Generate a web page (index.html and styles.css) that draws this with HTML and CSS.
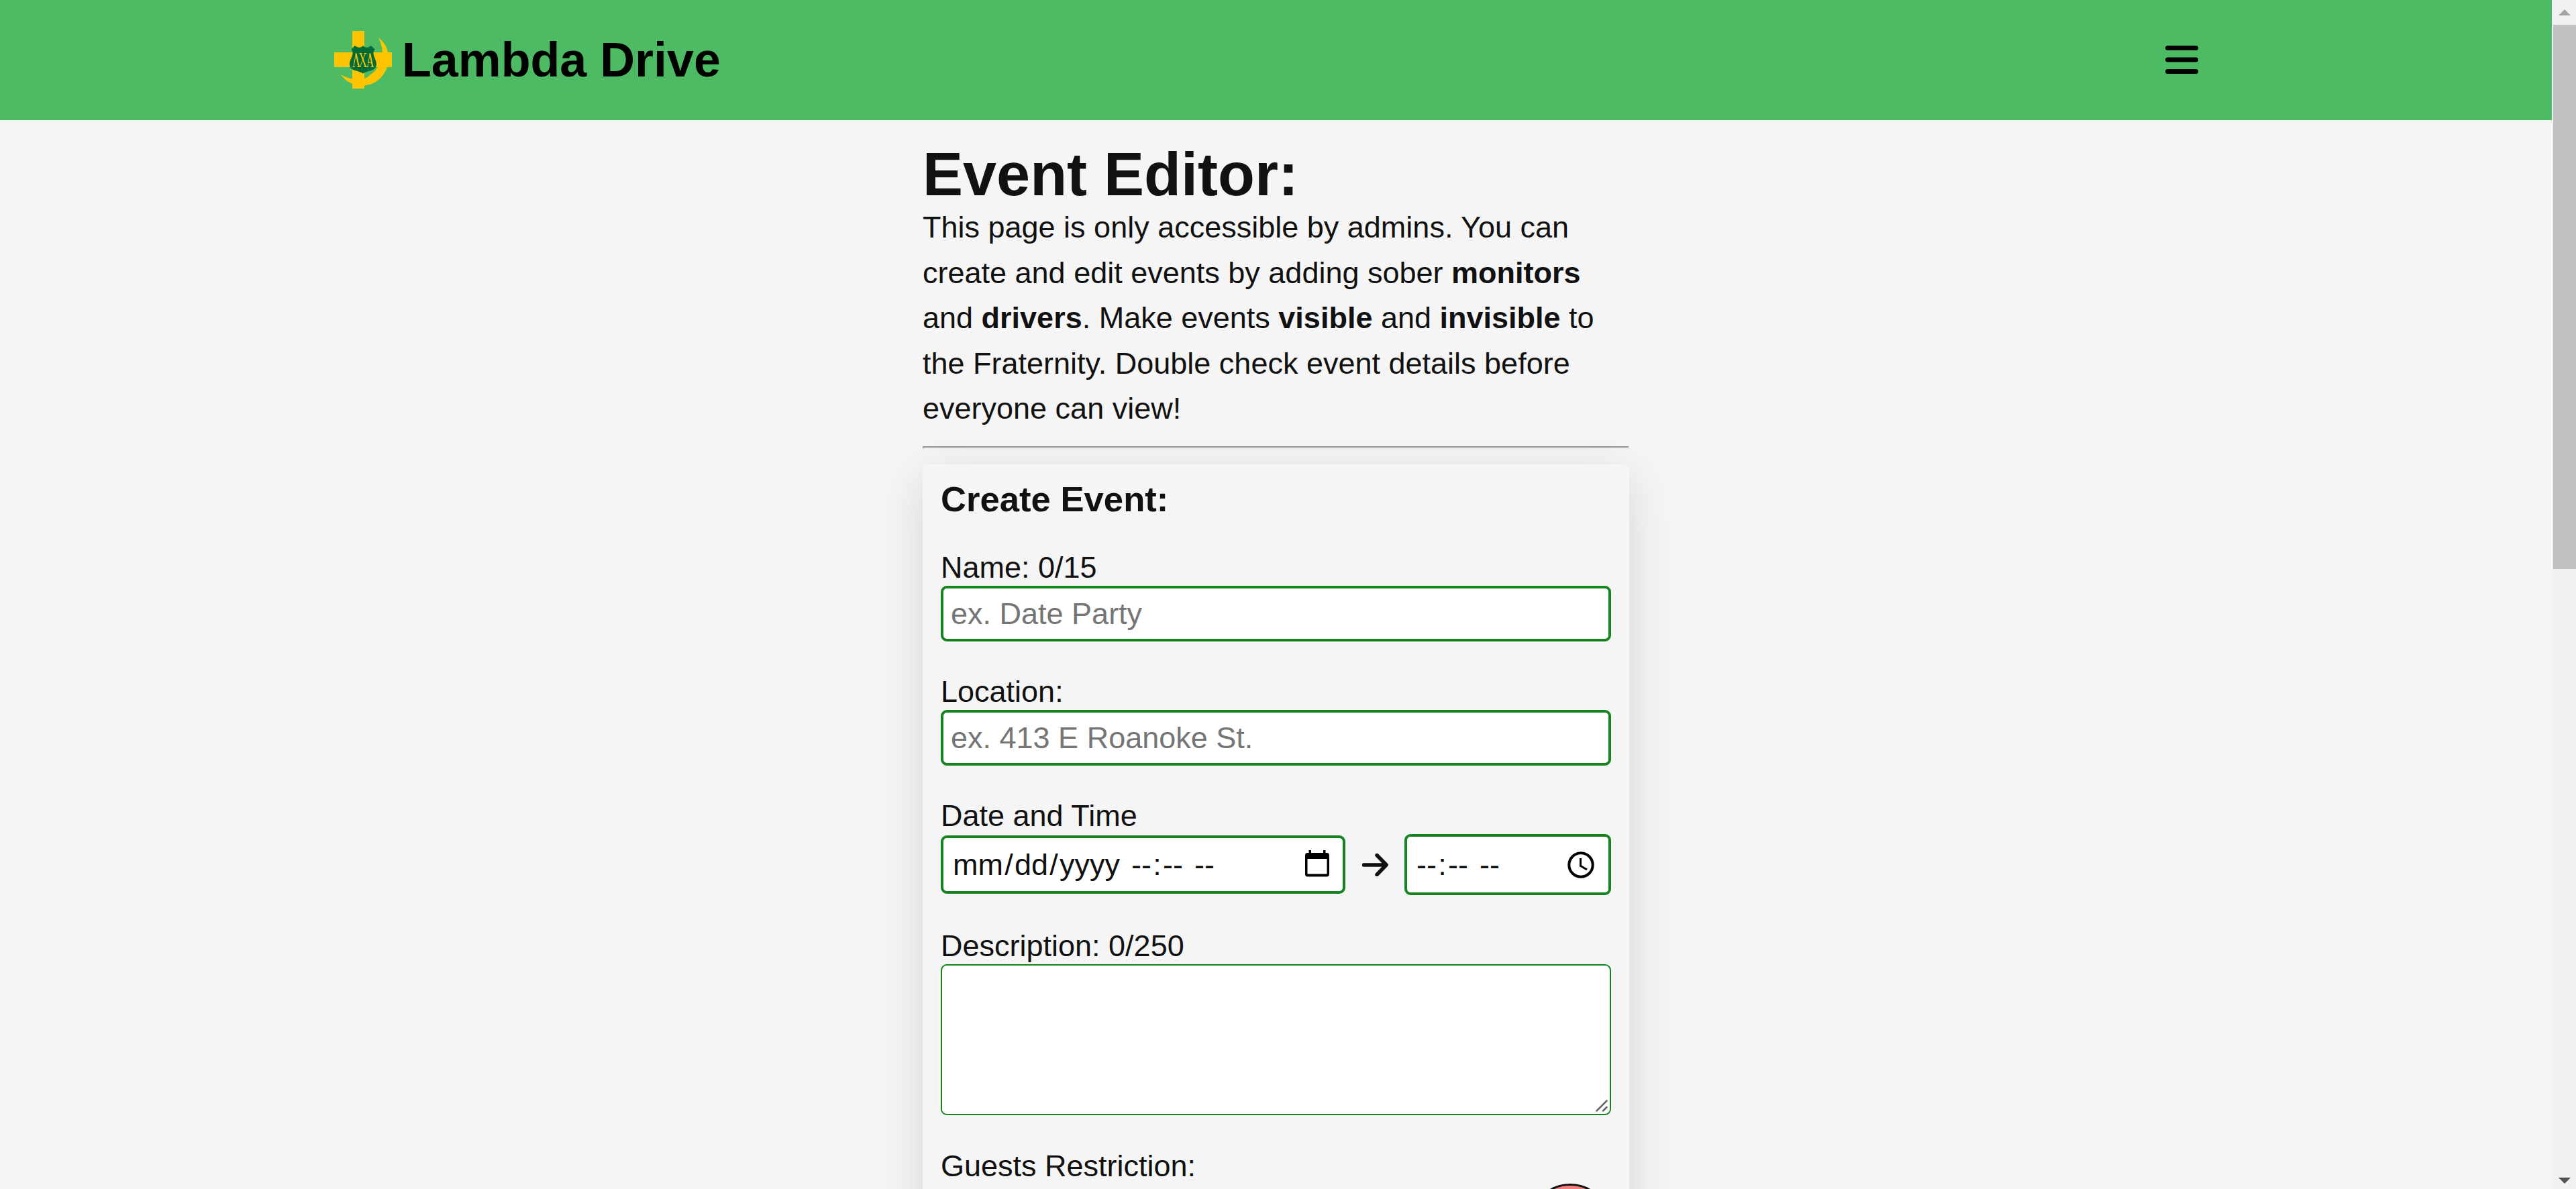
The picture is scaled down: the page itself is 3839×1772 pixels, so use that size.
FILE: index.html
```html
<!DOCTYPE html>
<html lang="en">
<head>
<meta charset="utf-8">
<title>Lambda Drive</title>
<link rel="stylesheet" href="styles.css">
</head>
<body>
<div class="page">
  <header class="header">
    <div class="brand">
      <svg class="logo" viewBox="0 0 86 86">
        <path fill="#ffc400" d="M27 0h18v86H27zM0 32h86v22H0z"/>
        <path fill="#ffc400" d="M66 10C77 18 81.500 30 81 42C80 64 64 81 43 81.500C28 81.500 16 75 10 65C18 70 27 72.500 36 72C46 72 51 69 54 65Q61 61 65 54C74 43 74 26 66 10z"/>
        <path fill="#006b37" d="M31 22q3.500 3.500 8 2.500q2.500-.5 4-2.500q1.500 2 4 2.500q4.500 1 8-2.500l5.500 5.500q-3 3.500-1.500 9c1 4 4 8 4 13c0 5-3 8-8 9.500q-8 2-12 4.500q-4-2.500-12-4.500c-5-1.500-8-4.500-8-9.500c0-5 3-9 4-13q1.500-5.500-1.500-9z"/>
        <g fill="none" stroke="#ffc400">
          <path stroke-width="2" d="M32.500 33.500l4.300 20M39.500 33.500l7.500 20M53.300 33.500l4 20"/>
          <path stroke-width="1" d="M32.500 34l-3.500 19.500M46.500 33.500l-8 20M53.300 34l-3.500 19.500M51 47.500h5M27.500 53.500h3.500M34.500 53.500h5.500M37.500 33.500h4M44.500 33.500h4M44.500 53.500h6.500M54.500 53.500h4.500"/>
        </g>
      </svg>
      <span class="brand-name">Lambda Drive</span>
    </div>
    <svg class="menu" viewBox="0 0 49 42"><rect width="49" height="7" rx="3.5"/><rect y="17.500" width="49" height="7" rx="3.5"/><rect y="35" width="49" height="7" rx="3.5"/></svg>
  </header>
  <main class="main">
    <h1 class="title">Event Editor:</h1>
    <p class="intro">This page is only accessible by admins. You can create and edit events by adding sober <b>monitors</b> and <b>drivers</b>. Make events <b>visible</b> and <b>invisible</b> to the Fraternity. Double check event details before everyone can view!</p>
    <div class="rule"></div>
    <form class="card">
      <h2 class="card-title">Create Event:</h2>
      <label class="label">Name: 0/15</label>
      <input class="input" type="text" placeholder="ex. Date Party">
      <label class="label">Location:</label>
      <input class="input" type="text" placeholder="ex. 413 E Roanoke St.">
      <label class="label">Date and Time</label>
      <div class="when">
        <div class="field date">
          <div><span class="seg">mm</span>/<span class="seg">dd</span>/<span class="seg">yyyy</span> <span class="seg">--</span>:<span class="seg">--</span> <span class="seg">--</span></div>
          <svg class="calendar" viewBox="0 0 36 40"><path fill-rule="evenodd" d="M5.500 0h3.500v4h18V0h3.500v4h2q3.500 0 3.500 4v27.500q0 4-3.500 4h-29q-3.500 0-3.500-4V8q0-4 3.500-4h2zM3.500 13v22.500h29V13z"/></svg>
        </div>
        <svg class="arrow" viewBox="0 0 39 34"><path d="M2.500 17h33M22 2.500L36 17L22 31.500"/></svg>
        <div class="field time">
          <div><span class="seg">--</span>:<span class="seg">--</span> <span class="seg">--</span></div>
          <svg class="clock" viewBox="0 0 40 40"><circle cx="20" cy="20" r="17.700" stroke-width="4"/><path stroke-width="3" d="M19.500 10v11.500l9.500 5.500"/></svg>
        </div>
      </div>
      <label class="label">Description: 0/250</label>
      <div class="textarea"><svg class="grip" viewBox="0 0 18 18"><path d="M1.500 16.500l15-15M11 16.500l5.500-5.500"/></svg></div>
      <div class="guests"><label class="label">Guests Restriction:</label><span class="dot"></span></div>
    </form>
  </main>
</div>
<div class="scrollbar"><i class="up"></i><div class="thumb"></div><i class="down"></i></div>
</body>
</html>
```
FILE: styles.css
```css
* { box-sizing: border-box; }
body {
  margin: 0;
  height: 1772px;
  overflow: hidden;
  display: flex;
  background: #f5f5f5;
  color: #111;
  font: 45px/67.5px "Liberation Sans", Arial, sans-serif;
}
.page { width: 3803px; height: 1772px; overflow: hidden; }
.header {
  height: 179px;
  padding: 0 527px 1px 498px;
  display: flex;
  align-items: center;
  justify-content: space-between;
  background: #4dbb63;
  color: #000;
}
.brand { display: flex; align-items: center; gap: 15px; }
.logo { width: 86px; height: 86px; }
.brand-name { font-size: 71.8px; font-weight: bold; line-height: 86px; }
.menu { width: 49px; height: 42px; }
.main { width: 1053px; margin-left: 1375px; padding-top: 27px; }
.title { margin: 0; font-size: 90px; line-height: 108px; }
.intro { margin: -9px 0 0; height: 339px; }
.rule { height: 4px; margin: 21px 0 23px; border: 2px solid; border-color: #999 #eaeaea #eaeaea #999; }
.card {
  height: 1200px;
  padding: 18px 27px;
  border-radius: 9px;
  background: #f5f5f5;
  box-shadow: 0 18px 72px rgba(0, 0, 0, .13);
}
.card-title { margin: 0 0 40px; font-size: 52.65px; line-height: 67px; }
.label { display: block; line-height: 58px; }
.label + * { margin-top: -2px; }
.input {
  display: block;
  width: 100%;
  height: 83px;
  margin-bottom: 46px;
  padding: 0 11px;
  border: 4px solid #168321;
  border-radius: 9px;
  background: #fff;
  font: inherit;
}
.input::placeholder { color: #757575; }
.when { height: 91px; margin-bottom: 47px; display: flex; align-items: center; justify-content: space-between; }
.field {
  display: flex;
  align-items: center;
  border: 4px solid #168321;
  border-radius: 9px;
  background: #fff;
  padding-left: 11.75px;
}
.date { width: 603px; height: 87px; }
.time { width: 308px; height: 91px; }
.seg { padding: 0 2.25px; }
.calendar { width: 36px; height: 40px; margin: -3px 20px 0 auto; }
.clock { width: 40px; height: 40px; margin: 0 21px 0 auto; fill: none; stroke: #000; }
.arrow { width: 39px; height: 34px; fill: none; stroke: #111; stroke-width: 5.500; stroke-linecap: round; stroke-linejoin: round; }
.textarea {
  height: 225px;
  margin-bottom: 47px;
  padding: 3px;
  display: flex;
  align-items: flex-end;
  justify-content: flex-end;
  border: 2px solid #168321;
  border-radius: 9px;
  background: #fff;
}
.grip { width: 18px; height: 18px; stroke: #666; stroke-width: 2.500; stroke-linecap: round; }
.guests { display: flex; justify-content: space-between; }
.guests .dot { flex: none; width: 120px; height: 120px; margin: 55px 1px 0 0; border: 3px solid #111; border-radius: 50%; background: #f08080; }
.scrollbar { width: 36px; height: 1772px; display: flex; flex-direction: column; align-items: center; background: #f1f1f1; }
.thumb { width: 34px; height: 811px; margin-left: 2px; background: #c1c1c1; }
.up, .down { border: 9px solid transparent; }
.up { margin: 14px 0 14px 2px; border-bottom-color: #a3a3a3; border-top-width: 0; }
.down { margin: auto 0 8px 2px; border-top-color: #505050; border-bottom-width: 0; }
```
